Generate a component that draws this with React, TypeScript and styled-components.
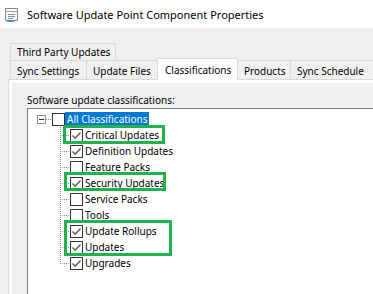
import React from "react";
import styled, { createGlobalStyle } from "styled-components";

const GlobalStyle = createGlobalStyle`
  html, body { margin: 0; padding: 0; background: #f0f0f0; }
  body { font-family: "Noto Sans", "Liberation Sans", sans-serif; }
  * { box-sizing: border-box; }
`;

const Window = styled.div`
  width: 373px;
  height: 294px;
  overflow: hidden;
  display: flex;
  flex-direction: column;
  background: #f0f0f0;
`;

const TitleBar = styled.div`
  height: 28px;
  flex: none;
  background: #ffffff;
  display: flex;
  align-items: center;
  padding: 1px 0 0 5px;
  gap: 9px;
`;

const TitleText = styled.span`
  font-size: 11px;
  color: #000;
  white-space: nowrap;
`;

const Body = styled.div`
  flex: 1;
  display: flex;
  flex-direction: column;
  padding: 15px 0 0 8px;
  min-height: 0;
`;

const TabRow = styled.div<{ $h: number }>`
  display: flex;
  align-items: flex-end;
  height: ${(p) => p.$h}px;
  padding-left: 2px;
  flex: none;
`;

const Tab = styled.div<{ $w: number; $active?: boolean; $top?: number }>`
  flex: none;
  width: ${(p) => p.$w}px;
  height: ${(p) => (p.$active ? 22 : 19)}px;
  border: 1px solid #d9d9d9;
  border-bottom: none;
  margin-left: -1px;
  background: ${(p) => (p.$active ? "#ffffff" : "#f0f0f0")};
  display: flex;
  align-items: center;
  padding: ${(p) => p.$top ?? 0}px 0 0 6px;
  font-size: 10px;
  color: #000;
  white-space: nowrap;
  ${(p) =>
    p.$active &&
    `
    margin-bottom: -1px;
    position: relative;
    z-index: 1;
    padding-left: 7px;
  `}
  &:first-child { margin-left: 0; }
`;

const UpperTab = styled(Tab)`
  height: 17px;
`;

const Panel = styled.div`
  flex: 1;
  min-height: 0;
  border-top: 1px solid #d9d9d9;
  border-left: 1px solid #d9d9d9;
  background: #ffffff;
  padding: 3px 0 0 3px;
  display: flex;
`;

const Page = styled.div`
  flex: 1;
  background: #f0f0f0;
  padding: 10px 0 0 15px;
  display: flex;
  flex-direction: column;
`;

const Label = styled.div`
  font-size: 10px;
  line-height: 14px;
  height: 15px;
  color: #000;
  white-space: nowrap;
`;

const Tree = styled.div`
  flex: 1;
  position: relative;
  background: #ffffff;
  border-top: 1px solid #7c7c7c;
  border-left: 1px solid #7c7c7c;
  padding-top: 2px;
`;

const Row = styled.div<{ $indent: number }>`
  height: 16px;
  display: flex;
  align-items: center;
  padding-left: ${(p) => p.$indent}px;
  font-size: 10px;
  white-space: nowrap;
`;

const Expander = styled.span`
  width: 9px;
  height: 9px;
  border: 1px solid #919191;
  background: #fff;
  position: relative;
  flex: none;
  &::after {
    content: "";
    position: absolute;
    left: 1px;
    top: 3px;
    width: 5px;
    height: 1px;
    background: #333;
  }
`;

const HLine = styled.span<{ $w: number }>`
  width: ${(p) => p.$w}px;
  height: 1px;
  flex: none;
  background-image: linear-gradient(to right, #8a8a8a 50%, transparent 50%);
  background-size: 2px 1px;
`;

const Connector = styled.span<{ $last?: boolean }>`
  width: 10px;
  height: 16px;
  flex: none;
  position: relative;
  &::before {
    content: "";
    position: absolute;
    left: 0;
    top: 0;
    width: 1px;
    height: ${(p) => (p.$last ? 9 : 16)}px;
    background-image: linear-gradient(to bottom, #8a8a8a 50%, transparent 50%);
    background-size: 1px 2px;
  }
  &::after {
    content: "";
    position: absolute;
    left: 1px;
    top: 8px;
    width: 9px;
    height: 1px;
    background-image: linear-gradient(to right, transparent 50%, #8a8a8a 50%);
    background-size: 2px 1px;
  }
`;

const Box = styled.span`
  width: 13px;
  height: 13px;
  border: 1px solid #333333;
  background: #fff;
  flex: none;
  display: flex;
  align-items: center;
  justify-content: center;
`;

const ItemText = styled.span<{ $selected?: boolean }>`
  height: 14px;
  line-height: 14px;
  padding: 0 2px;
  color: ${(p) => (p.$selected ? "#fff" : "#000")};
  background: ${(p) => (p.$selected ? "#0078d7" : "transparent")};
`;

const Highlight = styled.div`
  position: absolute;
  border: 3px solid #22b14c;
  pointer-events: none;
`;

const Check = () => (
  <svg width="11" height="11" viewBox="0 0 11 11">
    <path d="M1.5 5.5 L4.2 8.2 L9.5 2.5" fill="none" stroke="#5a5a5a" strokeWidth="1.4" />
  </svg>
);

const FormIcon = () => (
  <svg width="13" height="14" viewBox="0 0 13 14">
    <rect x="0.5" y="0.5" width="12" height="12" fill="#f7f7f7" stroke="#8a8a8a" />
    <line x1="1" y1="3.5" x2="12" y2="3.5" stroke="#a6a6a6" />
    <line x1="3" y1="6.5" x2="10" y2="6.5" stroke="#8f8f8f" />
    <line x1="3" y1="8.5" x2="10" y2="8.5" stroke="#8f8f8f" />
    <line x1="3" y1="10.5" x2="8" y2="10.5" stroke="#8f8f8f" />
    <rect x="2" y="12" width="7" height="2" fill="#3a96dd" />
  </svg>
);

const items: [string, boolean][] = [
  ["Critical Updates", true],
  ["Definition Updates", true],
  ["Feature Packs", false],
  ["Security Updates", true],
  ["Service Packs", false],
  ["Tools", false],
  ["Update Rollups", true],
  ["Updates", true],
  ["Upgrades", true],
];

const marks = [
  { left: 35, top: 16, w: 102, h: 19 },
  { left: 36, top: 63, w: 102, h: 19 },
  { left: 36, top: 111, w: 108, h: 36 },
];

export default function App() {
  return (
    <>
      <GlobalStyle />
      <Window>
        <TitleBar>
          <FormIcon />
          <TitleText>Software Update Point Component Properties</TitleText>
        </TitleBar>
        <Body>
          <TabRow $h={17}>
            <UpperTab $w={106}>Third Party Updates</UpperTab>
          </TabRow>
          <TabRow $h={19}>
            <Tab $w={77} $top={2}>Sync Settings</Tab>
            <Tab $w={72} $top={2}>Update Files</Tab>
            <Tab $w={81} $active>Classifications</Tab>
            <Tab $w={54} $top={2}>Products</Tab>
            <Tab $w={90} $top={2}>Sync Schedule</Tab>
          </TabRow>
          <Panel>
            <Page>
              <Label>Software update classifications:</Label>
              <Tree>
                <Row $indent={9}>
                  <Expander />
                  <HLine $w={6} />
                  <Box />
                  <ItemText $selected>All Classifications</ItemText>
                </Row>
                {items.map(([name, checked], i) => (
                  <Row key={name} $indent={32}>
                    <Connector $last={i === items.length - 1} />
                    <Box>{checked && <Check />}</Box>
                    <ItemText>{name}</ItemText>
                  </Row>
                ))}
                {marks.map((m, i) => (
                  <Highlight
                    key={i}
                    style={{ left: m.left, top: m.top, width: m.w, height: m.h }}
                  />
                ))}
              </Tree>
            </Page>
          </Panel>
        </Body>
      </Window>
    </>
  );
}
